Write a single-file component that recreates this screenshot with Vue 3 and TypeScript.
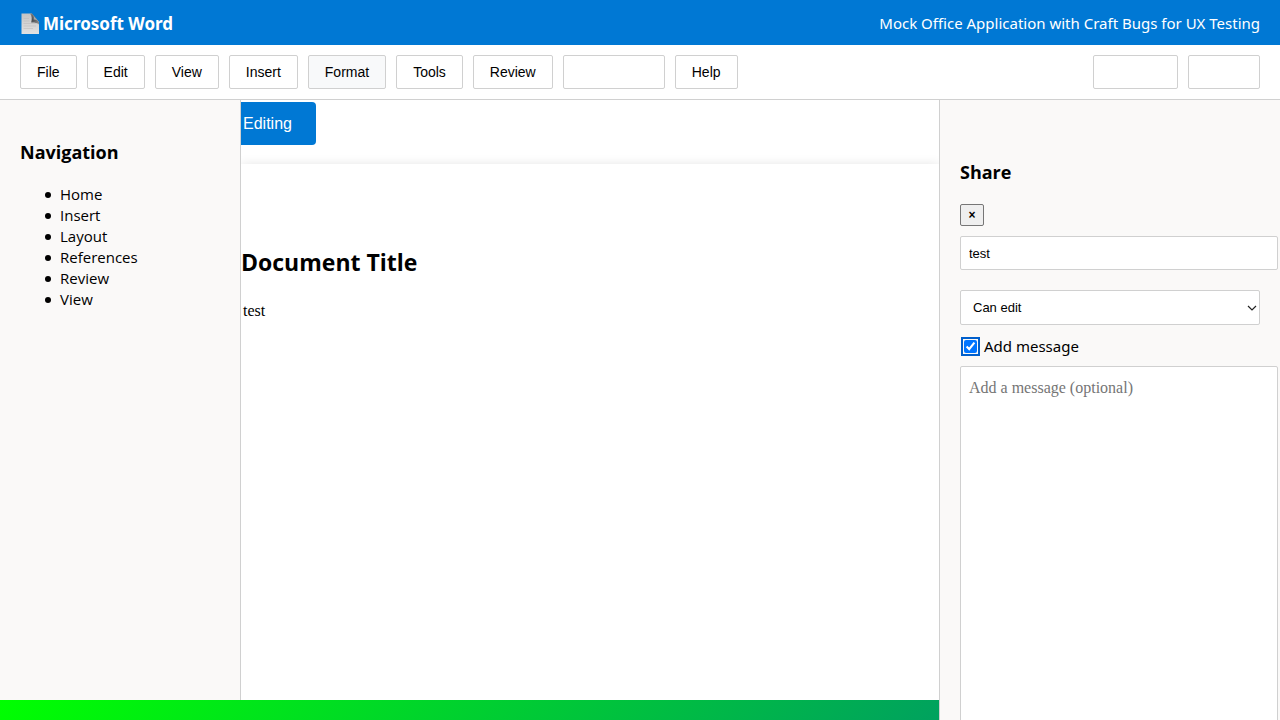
<script setup lang="ts">
import { ref } from 'vue'

interface MenuItem {
  id: string
  label: string
  hovered?: boolean
}

const menu: MenuItem[] = [
  { id: 'file', label: 'File' },
  { id: 'edit', label: 'Edit' },
  { id: 'view', label: 'View' },
  { id: 'insert', label: 'Insert' },
  { id: 'format', label: 'Format', hovered: true },
  { id: 'tools', label: 'Tools' },
  { id: 'review', label: 'Review' },
  { id: 'wide', label: '' },
  { id: 'help', label: 'Help' },
]
const actions = ['medium', 'small']
const sections = ['Home', 'Insert', 'Layout', 'References', 'Review', 'View']

const recipient = ref('test')
const permission = ref('Can edit')
const addMessage = ref(true)
const message = ref('')
</script>

<template>
  <div class="app">
    <header class="titlebar">
      <div class="brand">
        <svg class="doc-icon" viewBox="0 0 20 22" aria-hidden="true">
          <defs>
            <linearGradient id="paper" x1="0" y1="0" x2="0" y2="1">
              <stop offset="0" stop-color="#c4c4c4" />
              <stop offset="1" stop-color="#e2e2e2" />
            </linearGradient>
            <linearGradient id="fold" x1="0" y1="0" x2="0.8" y2="1">
              <stop offset="0" stop-color="#8a8a8a" />
              <stop offset="0.5" stop-color="#4a4d50" />
              <stop offset="1" stop-color="#8c8c8c" />
            </linearGradient>
          </defs>
          <path d="M1.5 0.5H11.5L19 9V21H1.5Z" fill="url(#paper)" />
          <path d="M10 0.5C12 3 12 6 11.2 9.5C14 9.3 17 9.8 19 11.5V9L12 0.5Z" fill="url(#fold)" />
          <path d="M12 0.8C14 3 14 5 13.5 6.5C16 6.5 18 7.5 19 9Z" fill="#a4a8ab" />
          <path d="M3.5 5.5H9M3.5 8H9.5M3.5 10.5H16M3.5 13H16M3.5 15.5H13" stroke="#bcbcbc" stroke-width="0.6" />
        </svg>
        <strong>Microsoft Word</strong>
      </div>
      <span class="tagline">Mock Office Application with Craft Bugs for UX Testing</span>
    </header>

    <nav class="toolbar">
      <button
        v-for="item in menu"
        :key="item.id"
        type="button"
        class="tool"
        :class="[item.id, { hovered: item.hovered }]"
      >{{ item.label }}</button>
      <span class="spacer"></span>
      <button v-for="size in actions" :key="size" type="button" class="tool" :class="size"></button>
    </nav>

    <div class="workspace">
      <aside class="sidebar">
        <h3>Navigation</h3>
        <ul>
          <li v-for="section in sections" :key="section">{{ section }}</li>
        </ul>
      </aside>

      <main class="canvas">
        <button type="button" class="editing">Editing</button>
        <article class="page">
          <h2>Document Title</h2>
          <p>test</p>
        </article>
      </main>

      <aside class="share">
        <h3 id="share-title">Share</h3>
        <button type="button" class="close">×</button>
        <input v-model="recipient" class="field" type="text" aria-labelledby="share-title" />
        <div class="select-wrap">
          <select v-model="permission" class="permission" aria-labelledby="share-title">
            <option>Can edit</option>
          </select>
          <svg class="chevron" viewBox="0 0 10 6" aria-hidden="true">
            <path d="M1 1L5 5L9 1" fill="none" stroke="#222" stroke-width="1.2" />
          </svg>
        </div>
        <label class="check">
          <input v-model="addMessage" type="checkbox" />
          <span>Add message</span>
        </label>
        <textarea
          v-model="message"
          class="message"
          placeholder="Add a message (optional)"
          aria-labelledby="share-title"
        ></textarea>
      </aside>

      <footer class="statusbar"></footer>
    </div>
  </div>
</template>

<style>
body {
  margin: 0;
  overflow: hidden;
}
</style>

<style scoped>
.app {
  display: flex;
  flex-direction: column;
  height: 100vh;
  overflow: hidden;
  background: #fff;
  color: #000;
  font: 15px/21px "Segoe UI", "Open Sans", "Noto Sans", sans-serif;
}

.titlebar {
  display: flex;
  flex: none;
  align-items: center;
  justify-content: space-between;
  height: 45px;
  padding: 2px 20px 0;
  box-sizing: border-box;
  background: #0078d4;
  color: #fff;
}

.tagline,
.check {
  font-family: "Segoe UI", "Noto Sans", "Open Sans", sans-serif;
}

.brand {
  display: flex;
  align-items: center;
  gap: 3px;
  font-family: "Segoe UI", "Noto Sans", "Open Sans", sans-serif;
  font-size: 17px;
}

.doc-icon {
  width: 20px;
  height: 22px;
}

.toolbar {
  display: flex;
  flex: none;
  gap: 10px;
  padding: 10px 20px;
  border-bottom: 1px solid #d0d0d0;
}

.tool {
  height: 34px;
  padding: 0 16px;
  border: 1px solid #d0d0d0;
  border-radius: 2px;
  background: #fff;
  color: #000;
  font: 14px "Liberation Sans", Arial, sans-serif;
}

.hovered {
  background: #f8f9fa;
}

.wide {
  width: 102px;
}

.medium {
  width: 85px;
}

.small {
  width: 72px;
}

.spacer {
  flex: 1;
}

.workspace {
  display: grid;
  flex: 1;
  grid-template-columns: 241px minmax(0, 1fr) 341px;
  grid-template-rows: minmax(0, 1fr) 20px;
  min-height: 0;
}

h2,
h3,
p,
ul {
  margin: 0;
}

h3 {
  font-size: 18px;
  line-height: 24px;
}

.sidebar {
  padding: 40px 20px;
  border-right: 1px solid #d0d0d0;
  background: #faf9f8;
}

.sidebar ul {
  margin-top: 20px;
  padding-left: 25px;
  list-style: none;
}

.sidebar li {
  display: flex;
  align-items: center;
  gap: 9px;
  line-height: 21px;
}

.sidebar li::before {
  width: 6px;
  height: 6px;
  border-radius: 50%;
  background: #000;
  content: "";
}

.canvas {
  overflow: hidden;
}

.editing {
  display: block;
  height: 43px;
  margin: 2px 0 19px;
  padding: 0 24px 0 2px;
  border: 0;
  border-radius: 0 4px 4px 0;
  background: #0078d4;
  color: #fff;
  font: 16px "Liberation Sans", Arial, sans-serif;
}

.page {
  min-height: 600px;
  padding-top: 82px;
  background: #fff;
  box-shadow: 0 0 10px rgba(0, 0, 0, 0.1);
}

.page h2 {
  font-size: 23px;
  line-height: 32px;
}

.page p {
  margin-top: 22px;
  padding-left: 2px;
  font: 16px/21px "Liberation Serif", "Times New Roman", serif;
}

.share {
  display: flex;
  flex-direction: column;
  align-items: flex-start;
  grid-row: 1 / 3;
  grid-column: 3;
  z-index: 1;
  padding: 60px 20px 0;
  overflow: hidden;
  border-left: 1px solid #d0d0d0;
  background: #faf9f8;
}

.share > * {
  flex: none;
}

.close {
  width: 24px;
  height: 22px;
  margin: 20px 0 10px;
  padding: 0;
  border: 1px solid #767676;
  border-radius: 2px;
  background: #efefef;
  color: #000;
  font: bold 12px "Liberation Sans", Arial, sans-serif;
}

.field,
.message {
  width: 100%;
  padding: 8px;
  border: 1px solid #d0d0d0;
  border-radius: 2px;
  background: #fff;
  color: #000;
}

.field {
  height: 16px;
  margin-bottom: 20px;
  font: 13px "Liberation Sans", Arial, sans-serif;
}

.select-wrap {
  position: relative;
  width: 100%;
}

.permission {
  display: block;
  width: 100%;
  height: 35px;
  padding: 0 24px 0 12px;
  border: 1px solid #d0d0d0;
  border-radius: 2px;
  appearance: none;
  background: #fff;
  color: #000;
  font: 13px "Liberation Sans", Arial, sans-serif;
}

.chevron {
  position: absolute;
  top: 15px;
  right: 3px;
  width: 10px;
  height: 6px;
  pointer-events: none;
}

.check {
  display: flex;
  align-items: center;
  gap: 7px;
  margin: 11px 0 9px;
}

.check input {
  width: 13px;
  height: 13px;
  margin: 0 0 0 4px;
  border-radius: 2px;
  outline: 2px solid #005fcc;
  outline-offset: 1px;
  accent-color: #0075ff;
}

.message {
  height: 500px;
  padding-top: 10px;
  font: 16px/22px "Liberation Serif", "Times New Roman", serif;
  resize: none;
}

.message::placeholder {
  color: #757575;
}

.statusbar {
  grid-row: 2;
  grid-column: 1 / 4;
  background: linear-gradient(135deg, #0f0, #008080);
}
</style>
